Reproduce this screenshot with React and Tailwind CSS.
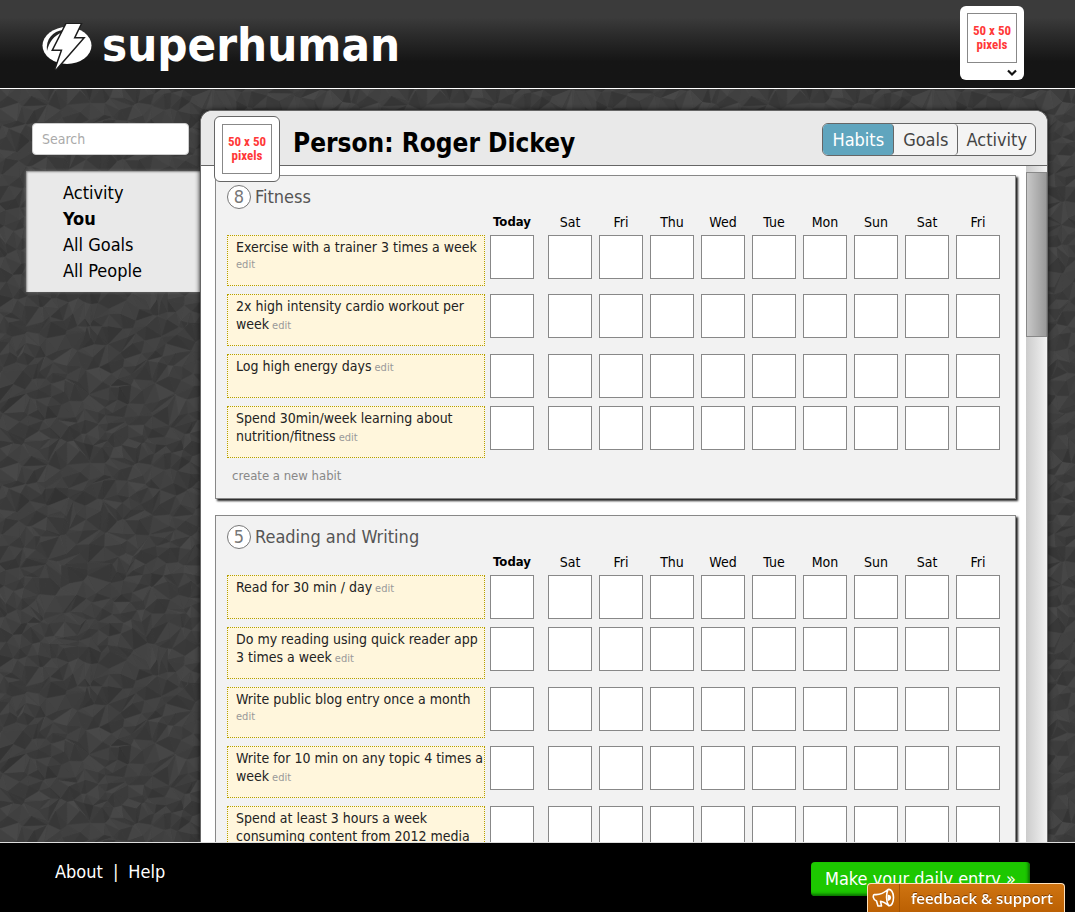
const TILE = 360;
const COLS = 17;
const ROWS = 22;

// Deterministic pseudo random numbers keep the rock texture stable between renders.
function createRandom(seed) {
  let s = seed;
  return () => {
    s = (s * 1664525 + 1013904223) % 4294967296;
    return s / 4294967296;
  };
}

// Keeps the part of a polygon that is closer to a than to b.
function clipToNearest(poly, a, b) {
  const nx = b[0] - a[0];
  const ny = b[1] - a[1];
  const d = nx * ((a[0] + b[0]) / 2) + ny * ((a[1] + b[1]) / 2);
  const side = (p) => p[0] * nx + p[1] * ny - d;
  const out = [];
  poly.forEach((p, i) => {
    const q = poly[(i + 1) % poly.length];
    const sp = side(p);
    const sq = side(q);
    if (sp <= 0) out.push(p);
    if (sp * sq < 0) {
      const t = sp / (sp - sq);
      out.push([p[0] + (q[0] - p[0]) * t, p[1] + (q[1] - p[1]) * t]);
    }
  });
  return out;
}

// Builds a seamless tile of faceted stones.
function buildFacets() {
  const rnd = createRandom(77);
  const cw = TILE / COLS;
  const ch = TILE / ROWS;
  const seeds = [];
  for (let r = 0; r < ROWS; r++) {
    for (let c = 0; c < COLS; c++) {
      seeds.push([(c + rnd() * 1.1) * cw, (r + rnd() * 1.1) * ch]);
    }
  }
  const all = [];
  [-TILE, 0, TILE].forEach((dx) =>
    [-TILE, 0, TILE].forEach((dy) => seeds.forEach((s) => all.push([s[0] + dx, s[1] + dy])))
  );
  const facets = [];
  seeds.forEach((s) => {
    let poly = [[s[0] - 45, s[1] - 45], [s[0] + 45, s[1] - 45], [s[0] + 45, s[1] + 45], [s[0] - 45, s[1] + 45]];
    all.forEach((o) => {
      const dist = Math.hypot(o[0] - s[0], o[1] - s[1]);
      if (dist > 0.01 && dist < 75) poly = clipToNearest(poly, s, o);
    });
    const peak = [s[0] + (rnd() - 0.5) * 8, s[1] + (rnd() - 0.5) * 7];
    const tone = 62 + (rnd() - 0.5) * 4;
    poly.forEach((p, i) => {
      const q = poly[(i + 1) % poly.length];
      const mx = (p[0] + q[0]) / 2 - s[0];
      const my = (p[1] + q[1]) / 2 - s[1];
      const len = Math.hypot(mx, my) || 1;
      const g = Math.round(tone + ((-my - mx * 0.3) / len) * 7 + (rnd() - 0.5) * 6);
      facets.push({ g, pts: [p, q, peak] });
    });
  });
  return facets;
}

const FACETS = buildFacets();

function shifts(pts) {
  const xs = pts.map((p) => p[0]);
  const ys = pts.map((p) => p[1]);
  const sx = [0];
  const sy = [0];
  if (Math.min(...xs) < 0) sx.push(TILE);
  if (Math.max(...xs) > TILE) sx.push(-TILE);
  if (Math.min(...ys) < 0) sy.push(TILE);
  if (Math.max(...ys) > TILE) sy.push(-TILE);
  return sx.flatMap((x) => sy.map((y) => [x, y]));
}

function RockTexture() {
  return (
    <svg className="absolute inset-0 -z-10 h-full w-full" aria-hidden="true">
      <defs>
        <pattern id="rock" width={TILE} height={TILE} patternUnits="userSpaceOnUse">
          <rect width={TILE} height={TILE} fill="#3e3e3e" />
          {FACETS.flatMap((f, i) =>
            shifts(f.pts).map(([dx, dy]) => (
              <polygon
                key={`${i}/${dx}/${dy}`}
                points={f.pts.map((p) => `${(p[0] + dx).toFixed(1)},${(p[1] + dy).toFixed(1)}`).join(' ')}
                fill={`rgb(${f.g},${f.g},${f.g})`}
                stroke={`rgb(${f.g - 2},${f.g - 2},${f.g - 2})`}
                strokeWidth="0.5"
              />
            ))
          )}
        </pattern>
      </defs>
      <rect width="100%" height="100%" fill="url(#rock)" />
    </svg>
  );
}

function BoltLogo() {
  return (
    <svg width="50" height="48" viewBox="0 0 50 48" aria-hidden="true">
      <ellipse cx="25" cy="22.5" rx="24.5" ry="18.5" fill="#fff" />
      <path d="M21 7C11 8 3.500 16 5 28C7 19 12 12.500 20 9.500Z" fill="#242424" />
      <path
        d="M24.500 1H38.500L31.500 15.500H40.500L13.500 46.500L20.500 26.500H11.500Z"
        fill="#fff"
        stroke="#1d1d1d"
        strokeWidth="3"
        strokeLinejoin="miter"
        paintOrder="stroke"
      />
    </svg>
  );
}

function Avatar() {
  return (
    <span className="flex h-[50px] w-[50px] flex-col items-center justify-center border border-[#888] bg-white text-center font-['Liberation_Sans_Narrow','Roboto_Condensed',Roboto,sans-serif] text-[13px] leading-[14px] font-bold text-[#ff3838]">
      <span className="whitespace-nowrap">50 x 50</span>
      <span>pixels</span>
    </span>
  );
}

const DAYS = ['Sat', 'Fri', 'Thu', 'Wed', 'Tue', 'Mon', 'Sun', 'Sat', 'Fri'];

const GOALS = [
  {
    count: 8,
    name: 'Fitness',
    habits: [
      { lines: ['Exercise with a trainer 3 times a week'], edit: 'below' },
      { lines: ['2x high intensity cardio workout per', 'week'], edit: 'inline' },
      { lines: ['Log high energy days'], edit: 'inline' },
      { lines: ['Spend 30min/week learning about', 'nutrition/fitness'], edit: 'inline' },
    ],
    canAdd: true,
  },
  {
    count: 5,
    name: 'Reading and Writing',
    habits: [
      { lines: ['Read for 30 min / day'], edit: 'inline' },
      { lines: ['Do my reading using quick reader app', '3 times a week'], edit: 'inline' },
      { lines: ['Write public blog entry once a month'], edit: 'below' },
      { lines: ['Write for 10 min on any topic 4 times a', 'week'], edit: 'inline' },
      { lines: ['Spend at least 3 hours a week', 'consuming content from 2012 media'] },
    ],
  },
];

function Habit({ habit }) {
  const last = habit.lines.length - 1;
  return (
    <div className="min-h-11 border border-dotted border-[#b5a000] bg-[#fff6dc] px-2 pt-[2px] pb-3 text-[14px] leading-[18px] whitespace-nowrap text-[#222]">
      {habit.lines.map((line, i) => (
        <div key={line}>
          {line}
          {i === last && habit.edit === 'inline' && (
            <a href="#edit" className="ml-[3px] text-[11px] leading-none text-[#999]">edit</a>
          )}
        </div>
      ))}
      {habit.edit === 'below' && (
        <a href="#edit" className="block text-[11px] leading-[17px] text-[#999]">edit</a>
      )}
    </div>
  );
}

function GoalCard({ goal }) {
  return (
    <section className="border border-[#888] bg-[#f2f2f2] pt-[9px] pr-[15px] pb-3 pl-[11px] shadow-[2px_2px_2px_#222]">
      <h2 className="flex items-center gap-1 text-[18px] leading-6 text-[#555]">
        <span className="flex h-6 w-6 items-center justify-center rounded-full border border-[#777] bg-white text-[#777]">{goal.count}</span>
        {goal.name}
      </h2>
      <table className="w-full table-fixed border-collapse">
        <thead>
          <tr className="text-[14px] leading-[26px]">
            <th aria-label="Habit" />
            <th className="w-11 p-0 text-center text-[13px] font-bold">Today</th>
            {DAYS.map((day, i) => (
              <th key={i} className={i === 0 ? 'w-[58px] p-0 pl-[14px] text-center font-normal' : 'w-[51px] p-0 pl-[7px] text-center font-normal'}>
                {day}
              </th>
            ))}
          </tr>
        </thead>
        <tbody>
          {goal.habits.map((habit) => (
            <tr key={habit.lines[0]} className="align-top">
              <td className="p-0 pr-[5px] pb-2"><Habit habit={habit} /></td>
              {['Today', ...DAYS].map((day, i) => (
                <td key={i} className={i === 0 ? 'p-0' : i === 1 ? 'p-0 pl-[14px]' : 'p-0 pl-[7px]'}>
                  <button type="button" aria-label={`${habit.lines[0]}, ${day}`} className="block h-11 w-11 border border-[#888] bg-white" />
                </td>
              ))}
            </tr>
          ))}
        </tbody>
      </table>
      {goal.canAdd && (
        <a href="#new-habit" className="ml-[5px] block text-[13px] leading-5 text-[#888]">create a new habit</a>
      )}
    </section>
  );
}

function Header() {
  return (
    <header className="flex h-[89px] shrink-0 items-start justify-between border-b border-white bg-linear-to-b from-[#3b3b3b] from-20% to-[#151515] to-70% pr-[51px] pl-[42px]">
      <a href="#home" className="mt-[23px] flex items-start gap-[10px] text-white">
        <BoltLogo />
        <span className="text-[47px] leading-[44px] font-bold">superhuman</span>
      </a>
      <button type="button" aria-label="Account menu" className="mt-[6px] flex h-[74px] w-16 flex-col items-center rounded-md bg-white pt-[7px]">
        <Avatar />
        <svg className="mt-[6px] mr-[6px] self-end" width="12" height="8" viewBox="0 0 12 8" aria-hidden="true">
          <path d="M2 1.500L6 5.500L10 1.500" fill="none" stroke="#111" strokeWidth="2.200" />
        </svg>
      </button>
    </header>
  );
}

function Sidebar() {
  return (
    <aside className="w-[200px] shrink-0 pt-[34px]">
      <input
        type="search"
        aria-label="Search"
        placeholder="Search"
        className="ml-8 block h-8 w-[157px] rounded border border-[#ccc] bg-white px-[9px] text-[14px] placeholder:text-[#aaa]"
      />
      <nav className="mt-4 ml-[26px] flex flex-col bg-[#e9e9e9] pt-[9px] pb-2 pl-[37px] text-[18px] leading-[26px] text-black shadow-[inset_1px_1px_2px_#888,0_0_3px_#777]">
        <a href="#activity">Activity</a>
        <a href="#you" className="font-bold">You</a>
        <a href="#goals">All Goals</a>
        <a href="#people">All People</a>
      </nav>
    </aside>
  );
}

function Panel() {
  return (
    <main className="mt-[21px] mr-[27px] flex min-w-0 flex-1 flex-col rounded-t-xl border border-b-0 border-[#666] bg-white shadow-[0_0_5px_#111]">
      <div className="relative flex h-[55px] shrink-0 items-center justify-between rounded-t-xl border-b border-[#666] bg-[#e9e9e9] pr-[11px] pl-[92px]">
        <div className="absolute top-[5px] left-[13px] rounded-md border border-[#666] bg-white p-[7px]">
          <Avatar />
        </div>
        <h1 className="mt-[10px] text-[26px] leading-8 font-bold whitespace-nowrap">Person: Roger Dickey</h1>
        <div className="mt-[2px] flex h-[33px] overflow-hidden rounded-md border border-[#666] bg-[#f4f4f4] text-[18px] text-[#444]">
          <button type="button" className="rounded-r border-r border-[#666] bg-[#60a5be] px-[9px] text-white">Habits</button>
          <button type="button" className="rounded-r border-r border-[#666] px-[9px]">Goals</button>
          <button type="button" className="px-2">Activity</button>
        </div>
      </div>
      <div className="flex min-h-0 flex-1">
        <div className="min-w-0 flex-1 space-y-4 overflow-hidden pt-[9px] pr-[10px] pl-[14px]">
          {GOALS.map((goal) => (
            <GoalCard key={goal.name} goal={goal} />
          ))}
        </div>
        <div className="w-[21px] shrink-0 bg-linear-to-r from-[#ccc] to-[#f2f2f2] pt-[6px]">
          <div className="h-[165px] border border-[#888] bg-linear-to-r from-[#c8c8c8] to-[#999]" />
        </div>
      </div>
    </main>
  );
}

function Footer() {
  return (
    <footer className="flex h-[70px] shrink-0 items-start justify-between border-t border-[#ddd] bg-black pr-[45px] pl-[55px] text-[18px] text-white">
      <div className="flex gap-[10px] pt-4 leading-[26px]">
        <a href="#about">About</a>
        <span>|</span>
        <a href="#help">Help</a>
      </div>
      <button type="button" className="mt-[19px] h-[34px] rounded bg-[#1dc800] px-[14px] leading-[34px] whitespace-nowrap shadow-[inset_-2px_-2px_3px_#0a7000]">
        Make your daily entry »
      </button>
    </footer>
  );
}

function FeedbackTab() {
  return (
    <button type="button" className="fixed right-[10px] bottom-0 flex h-[29px] items-stretch rounded-t border border-b-0 border-[#ffe2bd] bg-linear-to-b from-[#cf7411] to-[#bb6003] font-['Open_Sans',sans-serif] text-[15px] leading-[29px] font-semibold text-white">
      <span className="flex w-8 items-center justify-center border-r border-[#a45302]">
        <svg width="23" height="20" viewBox="0 0 23 20" fill="none" stroke="#fff" strokeWidth="1.600" strokeLinejoin="round" aria-hidden="true">
          <path d="M2.500 6.500C7.500 7 12 5 16 1.500C14 6 14 13 16.500 17.500C13 14.500 11 13.500 8.500 13.200L9.500 18H6L4.500 13C1 12 .5 7 2.500 6.500Z" />
          <path d="M16 1.500C19 .5 21.500 4.500 21.500 9.500S19.500 18.500 16.500 17.500" />
          <path d="M16.500 7.500C19 8 19 11 16.500 12Z" fill="#fff" />
        </svg>
      </span>
      <span className="px-[11px] whitespace-nowrap [text-shadow:0_-1px_0_#7a3c00]">feedback &amp; support</span>
    </button>
  );
}

export default function App() {
  return (
    <div className="flex h-screen flex-col overflow-hidden bg-[#3b3b3b] font-['DejaVu_Sans_Condensed','DejaVu_Sans',sans-serif] text-black">
      <Header />
      <div className="relative isolate flex min-h-0 flex-1 overflow-hidden">
        <RockTexture />
        <Sidebar />
        <Panel />
      </div>
      <Footer />
      <FeedbackTab />
    </div>
  );
}
